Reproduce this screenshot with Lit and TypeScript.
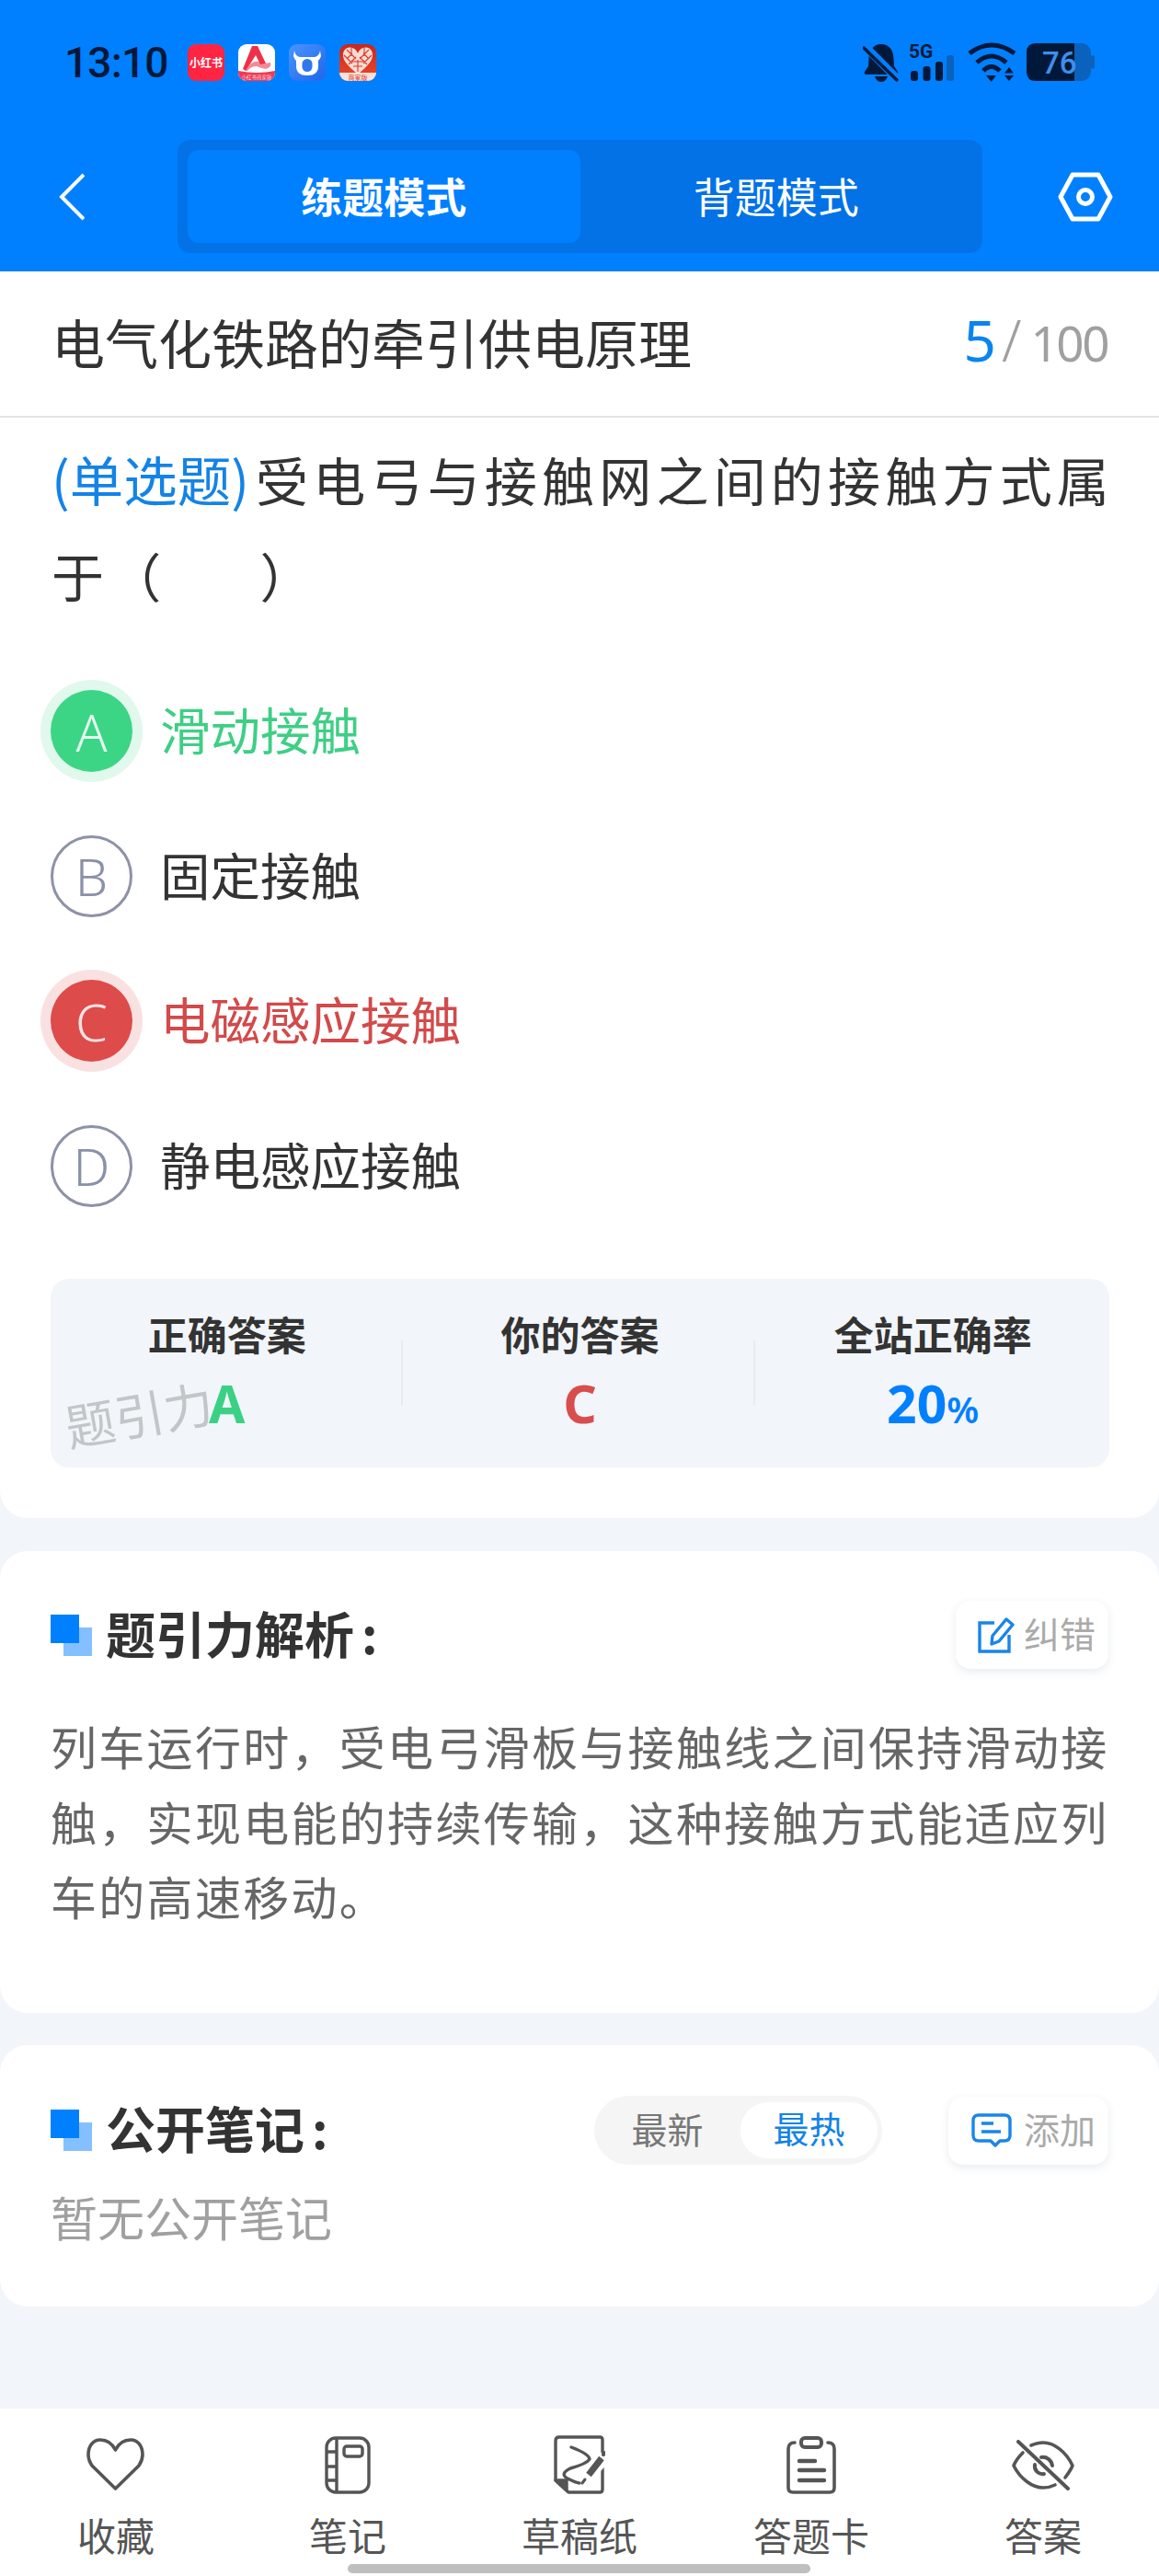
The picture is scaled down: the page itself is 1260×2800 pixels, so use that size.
import {LitElement, html, svg, css} from 'lit';
import {customElement} from 'lit/decorators.js';
import {classMap} from 'lit/directives/class-map.js';

const options = [
  {key: 'A', text: '滑动接触', state: 'right'},
  {key: 'B', text: '固定接触', state: ''},
  {key: 'C', text: '电磁感应接触', state: 'wrong'},
  {key: 'D', text: '静电感应接触', state: ''},
];

const DARK = '#00193a';
const GREY = '#555';

const appIcons = html`
  <svg width="40" height="40" viewBox="0 0 40 40">
    <rect width="40" height="40" rx="9" fill="#ff2442" />
    <text x="20" y="25" text-anchor="middle" font-size="12" font-weight="700" fill="#fff">小红书</text>
  </svg>
  <svg width="40" height="40" viewBox="0 0 40 40">
    <defs><clipPath id="c1"><rect width="40" height="40" rx="9" /></clipPath></defs>
    <g clip-path="url(#c1)">
      <rect width="40" height="40" fill="#fff" />
      <path d="M0 29 Q20 33 40 29 V40 H0Z" fill="#ee3a55" />
      <path d="M8 29 Q14 17 22 19 Q28 22 35 20 Q37 25 30 27 Q24 26 20 24 Q14 24 10 29Z" fill="#f58a94" />
      <path d="M15 2 L21 2 L30 21 L24 22 L19 12 Q14 20 8 29 L5 27 Z" fill="#ee3148" />
      <text x="20" y="37.5" text-anchor="middle" font-size="5.5" fill="#ffd8dd">小红书商家版</text>
    </g>
  </svg>
  <svg width="40" height="40" viewBox="0 0 40 40">
    <defs>
      <linearGradient id="g2" x1="0" y1="0" x2="1" y2="1">
        <stop offset="0" stop-color="#4a94ff" /><stop offset="1" stop-color="#1f66ea" />
      </linearGradient>
    </defs>
    <rect width="40" height="40" rx="9" fill="url(#g2)" />
    <path d="M6 7 Q7 13 12 14 H28 Q33 13 34 7 L35 13 Q34 16 32 18 V24 Q32 34 20 34 Q8 34 8 24 V18 Q6 16 5 13Z" fill="#fff" />
    <rect x="14.5" y="16" width="11" height="14" rx="5.5" fill="#2f78f0" />
  </svg>
  <svg width="40" height="40" viewBox="0 0 40 40">
    <defs>
      <clipPath id="c3"><rect width="40" height="40" rx="9" /></clipPath>
      <linearGradient id="g3" x1="0" y1="0" x2="0" y2="1">
        <stop offset="0" stop-color="#c9261a" /><stop offset="1" stop-color="#ea4a2e" />
      </linearGradient>
    </defs>
    <g clip-path="url(#c3)">
      <rect width="40" height="40" fill="url(#g3)" />
      <path d="M20 10 C16 0 3 2 4 13 C5 21 14 27 20 33 C26 27 35 21 36 13 C37 2 24 0 20 10Z" fill="#f8dcd2" />
      <path d="M8 6 L18 16 M32 6 L22 16 M5 12 L14 21 M35 12 L26 21 M13 3 V13 M27 3 V13 M8 16 L14 10 M32 16 L26 10 M20 17 V30 M14 19 H26 M15 24 H25 M10 22 L18 14 M30 22 L22 14" stroke="#d8392a" stroke-width="1.1" fill="none" />
      <rect y="31" width="40" height="9" fill="#fbe3da" />
      <text x="20" y="38.5" text-anchor="middle" font-size="7" fill="#d8392a">商家版</text>
    </g>
  </svg>
`;

const bell = svg`
  <path d="M20 1 C11 1 7 8 6.5 16 L6 25 L2 31 Q1 34 4 34 H36 Q39 34 38 31 L34 25 L33.5 16 C33 8 29 1 20 1Z" fill="${DARK}" />
  <path d="M13 36 H27 Q25 42 20 42 Q15 42 13 36Z" fill="${DARK}" />
  <path d="M1 2 L39 40" stroke="#0080ff" stroke-width="9" />
  <path d="M0 4 L38 41" stroke="${DARK}" stroke-width="3.5" />
`;

const signal = svg`
  <text x="0" y="16" font-size="21" font-weight="700" font-family="Roboto, sans-serif" fill="${DARK}">5G</text>
  <rect x="2" y="30" width="8" height="11" rx="3" fill="${DARK}" />
  <rect x="15.5" y="25" width="8" height="16" rx="3" fill="${DARK}" />
  <rect x="29" y="20" width="8" height="21" rx="3" fill="${DARK}" />
  <rect x="41" y="13" width="8" height="28" rx="3" fill="#0a62bc" />
`;

const wifi = svg`
  <g fill="none" stroke="${DARK}" stroke-width="5">
    <path d="M2 12 Q25.5 -6 51 12" />
    <path d="M10 22 Q25.5 8 42 22" />
    <path d="M17 31 Q25.5 22 35 31" />
  </g>
  <path d="M20 36 H31 L25.7 43Z" fill="${DARK}" />
  <path d="M40 33.5 L45 27 L50 33.5Z M40 36 H50 L45 42Z" fill="${DARK}" />
`;

const battery = svg`
  <rect width="70" height="41" rx="10" fill="#0a62bc" />
  <rect x="70" y="13" width="4" height="15" rx="2" fill="#0a62bc" />
  <path d="M10 0 H52 V41 H10 Q0 41 0 31 V10 Q0 0 10 0Z" fill="${DARK}" />
  <text x="17" y="33" font-size="33" font-weight="500" font-family="Roboto, sans-serif" fill="#3f8fe9">76</text>
`;

const navIcons = {
  heart: html`<svg width="64" height="58" viewBox="0 0 64 58" fill="none" stroke="${GREY}" stroke-width="3.6" stroke-linejoin="round">
    <path d="M31.5 13 C28 6 22 2 15 2 C7 2 2 9 2 18 C2 23 4 27 6 30 L31.5 55 L57 30 C59 27 61 23 61 18 C61 9 56 2 48 2 C41 2 35 6 31.5 13Z" />
  </svg>`,
  book: html`<svg width="50" height="63" viewBox="0 0 50 63" fill="none" stroke="${GREY}" stroke-width="3.4">
    <rect x="2" y="2" width="46" height="59" rx="10" />
    <path d="M13 2 V61 M2 17 H13 M2 33 H13 M2 48 H13" />
    <rect x="21" y="11" width="20" height="11" rx="3" />
  </svg>`,
  draft: html`<svg width="56" height="64" viewBox="0 0 56 64" fill="none" stroke="${GREY}" stroke-width="3.4" stroke-linecap="round" stroke-linejoin="round">
    <path d="M6 2 H50 Q53 2 53 5 V59 Q53 62 50 62 H16 L2 49 V6 Q2 2 6 2Z" />
    <path d="M2 49 H14 V60 Z" fill="${GREY}" />
    <path d="M19 13 Q38 20 39 26 Q36 31 18 36 Q6 42 15 47 Q25 52 28 52" />
    <path d="M56 23 L32 50" stroke="#fff" stroke-width="14" stroke-linecap="butt" />
    <path d="M52 25 L38 43" stroke-width="7" stroke-linecap="butt" />
    <path d="M54 21 L56 19" stroke-width="4" />
    <path d="M34 48 L31 52" stroke-width="3" />
  </svg>`,
  clip: html`<svg width="54" height="63" viewBox="0 0 54 63" fill="none" stroke="${GREY}" stroke-width="3.6" stroke-linecap="round">
    <path d="M9 7 Q2 7 2 14 V56 Q2 61 7 61 H47 Q52 61 52 56 V14 Q52 7 45 7" />
    <rect x="16" y="2" width="22" height="10" rx="4" stroke-width="4" />
    <path d="M14 27 H31 M14 37 H41 M14 48 H41" stroke-width="4.4" />
  </svg>`,
  eye: html`<svg width="68" height="55" viewBox="0 0 68 55" fill="none" stroke="${GREY}" stroke-width="3.6" stroke-linecap="round" stroke-linejoin="round">
    <path d="M21 6 C26 4 30 3 34 3 C46 3 59 13 66 28 C64 33 61 37 58 41" />
    <path d="M47 49 C43 51 38 52 34 52 C22 52 9 42 2 28 C4 23 8 18 12 14" />
    <path d="M32 19 C38 18 43 22 44 28" stroke-width="4" />
    <path d="M25 27 C24 33 29 38 35 37" stroke-width="4" />
    <path d="M7 2 L61 53" stroke-width="4" />
  </svg>`,
};

const navItems = [
  {icon: navIcons.heart, label: '收藏'},
  {icon: navIcons.book, label: '笔记'},
  {icon: navIcons.draft, label: '草稿纸'},
  {icon: navIcons.clip, label: '答题卡'},
  {icon: navIcons.eye, label: '答案'},
];

const mark = html`<svg class="mark" width="45" height="45" viewBox="0 0 45 45">
  <rect x="14" y="14" width="31" height="31" fill="#84c0ff" />
  <rect width="31" height="31" fill="#0080ff" />
</svg>`;

@customElement('app-root')
export class AppRoot extends LitElement {
  static styles = css`
    :host {
      display: flex;
      flex-direction: column;
      position: relative;
      width: 1260px;
      height: 2800px;
      background: #f2f5f9;
      font-family: 'Noto Sans CJK SC', 'Noto Sans', sans-serif;
      color: #333;
      overflow: hidden;
    }
    svg {
      display: block;
      flex: none;
    }
    .header {
      height: 295px;
      flex: none;
      background: #0080ff;
      box-sizing: border-box;
      padding-top: 47px;
    }
    .status {
      display: flex;
      align-items: center;
      height: 42px;
      padding-left: 70px;
    }
    .time {
      font: 500 46px/42px Roboto, sans-serif;
      letter-spacing: -0.8px;
      color: #00193a;
      width: 134px;
    }
    .apps {
      display: flex;
      gap: 15px;
    }
    .sys {
      display: flex;
      align-items: center;
      margin-left: auto;
      margin-right: 70px;
      gap: 12px;
    }
    .bell {
      margin-right: -2px;
    }
    .signal {
      margin-top: -6px;
    }
    .nav {
      display: flex;
      align-items: center;
      margin-top: 63px;
      height: 123px;
    }
    .back {
      margin-left: 64px;
    }
    .tabs {
      display: grid;
      grid-template-columns: 1fr 1fr;
      width: 875px;
      height: 123px;
      box-sizing: border-box;
      padding: 11px;
      margin-left: 101px;
      background: #0272e6;
      border-radius: 14px;
    }
    .tab {
      display: flex;
      align-items: center;
      justify-content: center;
      color: #fff;
      font-size: 45px;
      border-radius: 12px;
      padding-bottom: 3px;
    }
    .tab.active {
      background: #0080ff;
      font-weight: 700;
    }
    .setting {
      margin-left: 82px;
    }
    .paper {
      flex: none;
      background: #fff;
      border-radius: 0 0 30px 30px;
      padding-bottom: 55px;
    }
    .title-row {
      display: flex;
      align-items: center;
      justify-content: space-between;
      height: 157px;
      padding: 0 56px 0 56px;
      border-bottom: 2px solid #e4e4e4;
    }
    .title {
      font-size: 58px;
      margin-bottom: 6px;
    }
    .counter {
      display: flex;
      align-items: baseline;
      color: #a0a0a0;
      font-family: 'Noto Sans', sans-serif;
      font-size: 53px;
      line-height: 70px;
      margin-bottom: 6px;
    }
    .counter b {
      color: #0a84f0;
      font-size: 62px;
      font-weight: 400;
    }
    .counter i {
      font-style: normal;
      font-size: 62px;
      margin: 0 10px 0 6px;
      font-weight: 300;
    }
    .counter span {
      letter-spacing: -2.5px;
    }
    .question {
      margin: 14px 0 0;
      padding: 0 20px 0 56px;
      font-size: 57px;
      line-height: 104px;
      letter-spacing: 5.2px;
      white-space: nowrap;
    }
    .qtype {
      color: #1483e6;
      font-size: 58.5px;
      letter-spacing: 0;
      margin-right: 7px;
    }
    .blank {
      display: inline-block;
      width: 102px;
    }
    .options {
      margin-top: 40px;
    }
    .option {
      display: flex;
      align-items: center;
      height: 157.5px;
      padding-left: 55px;
      font-size: 54.5px;
      color: #333;
    }
    .option-text {
      margin-bottom: 6px;
    }
    .dot {
      width: 89px;
      height: 89px;
      box-sizing: border-box;
      display: flex;
      align-items: center;
      justify-content: center;
      flex: none;
      margin-right: 30px;
      border-radius: 50%;
      border: 3px solid #8e92a6;
      color: #8a90a8;
      font: 300 56px/1 'Noto Sans', sans-serif;
    }
    .right {
      color: #3ecf85;
    }
    .right .dot {
      background: #3bd585;
      border: none;
      box-shadow: 0 0 0 11px #e1f8ec;
      color: #e4faef;
    }
    .wrong {
      color: #d24a4a;
    }
    .wrong .dot {
      background: #dd4b4b;
      border: none;
      box-shadow: 0 0 0 11px #fae1e1;
      color: #fbe3e3;
    }
    .answers {
      position: relative;
      display: grid;
      grid-template-columns: repeat(3, 1fr);
      height: 205px;
      box-sizing: border-box;
      margin: 44px 54px 0 55px;
      padding-top: 31px;
      background: #f2f5f9;
      border-radius: 20px;
      text-align: center;
    }
    .col {
      position: relative;
    }
    .col + .col::before {
      content: '';
      position: absolute;
      left: -3px;
      top: 36px;
      height: 71px;
      width: 2px;
      background: #e9ebee;
    }
    .col-label {
      font-size: 43px;
      line-height: 56px;
      font-weight: 700;
    }
    .col-value {
      margin-top: 18px;
      font-size: 57px;
      line-height: 60px;
      font-weight: 700;
      font-family: 'Noto Sans', sans-serif;
    }
    .col-value small {
      font-size: 40px;
      font-weight: 600;
    }
    .green {
      color: #3bd184;
    }
    .red {
      color: #d84e4e;
    }
    .blue {
      color: #0080ff;
    }
    .watermark {
      position: absolute;
      left: 15px;
      top: 116px;
      font-size: 54px;
      line-height: 60px;
      color: #c3c6c9;
      transform: rotate(-10deg);
      white-space: nowrap;
    }
    .card {
      flex: none;
      margin-top: 36px;
      background: #fff;
      border-radius: 30px;
      padding: 54px 55px 0 55px;
    }
    .card.notes {
      margin-top: 35px;
      padding-top: 56px;
      padding-bottom: 63px;
    }
    .card-head {
      display: flex;
      align-items: center;
      height: 74px;
    }
    .mark {
      margin-right: 15px;
    }
    .card-title {
      font-size: 54px;
      font-weight: 700;
      margin: 0 auto 6px 0;
    }
    .card-title span {
      margin-left: 8px;
    }
    .pill {
      display: flex;
      align-items: center;
      height: 74px;
      box-sizing: border-box;
      padding: 0 14px 0 24px;
      gap: 10px;
      background: #fff;
      border-radius: 16px;
      box-shadow: 0 3px 10px rgba(30, 60, 100, 0.1);
      font-size: 39px;
      color: #aaa;
    }
    .pill.add {
      padding-left: 25px;
      gap: 13px;
    }
    .pill span {
      margin-bottom: 6px;
    }
    .analysis {
      margin-top: 43px;
      padding-bottom: 86px;
      font-size: 50px;
      line-height: 81.5px;
      letter-spacing: 2.3px;
      color: #666;
      white-space: nowrap;
    }
    .segment {
      display: flex;
      align-items: center;
      width: 313px;
      height: 75px;
      box-sizing: border-box;
      padding: 0 5px 0 0;
      margin-right: 72px;
      background: #f5f5f5;
      border-radius: 38px;
      font-size: 39px;
      color: #777;
    }
    .segment span {
      flex: 1;
      text-align: center;
      padding-bottom: 6px;
    }
    .segment .on {
      flex: none;
      width: 149px;
      height: 61px;
      line-height: 55px;
      padding-bottom: 0;
      background: #fff;
      border-radius: 30px;
      color: #1483e6;
    }
    .empty {
      margin-top: 21px;
      font-size: 51px;
      line-height: 70px;
      color: #a0a0a0;
    }
    .bottom {
      margin-top: auto;
      height: 182px;
      flex: none;
      display: grid;
      grid-template-columns: repeat(5, 1fr);
      background: #fff;
      padding-top: 29px;
      box-sizing: border-box;
    }
    .item {
      display: flex;
      flex-direction: column;
      align-items: center;
    }
    .item-icon {
      height: 64px;
      display: flex;
      align-items: center;
    }
    .item-label {
      margin-top: 19px;
      font-size: 42px;
      line-height: 50px;
      color: #555;
    }
    .home {
      position: absolute;
      left: 378px;
      bottom: 3px;
      width: 503px;
      height: 10px;
      border-radius: 5px;
      background: #bfbfbf;
    }
  `;

  renderStatus() {
    return html`
      <div class="status">
        <div class="time">13:10</div>
        <div class="apps">${appIcons}</div>
        <div class="sys">
          <svg class="bell" width="40" height="42" viewBox="0 0 40 42">${bell}</svg>
          <svg class="signal" width="52" height="48" viewBox="0 -6 52 48">${signal}</svg>
          <svg width="52" height="44" viewBox="0 0 52 44">${wifi}</svg>
          <svg width="74" height="42" viewBox="0 0 74 42">${battery}</svg>
        </div>
      </div>
    `;
  }

  renderNav() {
    return html`
      <div class="nav">
        <svg class="back" width="28" height="52" viewBox="0 0 28 52" fill="none" stroke="#fff" stroke-width="4">
          <path d="M27 2 L3 26 L27 50" />
        </svg>
        <div class="tabs">
          <div class="tab active">练题模式</div>
          <div class="tab">背题模式</div>
        </div>
        <svg class="setting" width="60" height="54" viewBox="0 0 60 54" fill="none" stroke="#fff" stroke-width="5" stroke-linejoin="round">
          <path d="M16 3 H44 L57 27 L44 51 H16 L3 27 Z" />
          <circle cx="30" cy="27" r="7.5" />
        </svg>
      </div>
    `;
  }

  renderQuestion() {
    return html`
      <div class="paper">
        <div class="title-row">
          <div class="title">电气化铁路的牵引供电原理</div>
          <div class="counter"><b>5</b><i>/</i><span>100</span></div>
        </div>
        <div class="question">
          <span class="qtype">(单选题)</span>受电弓与接触网之间的接触方式属<br />于（<span class="blank"></span>）
        </div>
        <div class="options">
          ${options.map(
            (o) => html`
              <div class=${classMap({option: true, right: o.state === 'right', wrong: o.state === 'wrong'})}>
                <div class="dot">${o.key}</div>
                <div class="option-text">${o.text}</div>
              </div>
            `
          )}
        </div>
        <div class="answers">
          <div class="col">
            <div class="col-label">正确答案</div>
            <div class="col-value green">A</div>
          </div>
          <div class="col">
            <div class="col-label">你的答案</div>
            <div class="col-value red">C</div>
          </div>
          <div class="col">
            <div class="col-label">全站正确率</div>
            <div class="col-value blue">20<small>%</small></div>
          </div>
          <div class="watermark">题引力</div>
        </div>
      </div>
    `;
  }

  renderAnalysis() {
    return html`
      <div class="card">
        <div class="card-head">
          ${mark}
          <div class="card-title">题引力解析<span>:</span></div>
          <div class="pill">
            <svg width="40" height="40" viewBox="0 0 40 40" fill="none" stroke="#1a85e8" stroke-width="3.4">
              <path d="M18 7 H2 V38 H34 V20" />
              <path d="M15 30 L16 21 L31 3 L38 9 L23 27 Z" stroke-linejoin="round" />
            </svg>
            <span>纠错</span>
          </div>
        </div>
        <div class="analysis">
          列车运行时，受电弓滑板与接触线之间保持滑动接<br />
          触，实现电能的持续传输，这种接触方式能适应列<br />
          车的高速移动。
        </div>
      </div>
    `;
  }

  renderNotes() {
    return html`
      <div class="card notes">
        <div class="card-head">
          ${mark}
          <div class="card-title">公开笔记<span>:</span></div>
          <div class="segment">
            <span>最新</span>
            <span class="on">最热</span>
          </div>
          <div class="pill add">
            <svg width="44" height="37" viewBox="0 0 44 37" fill="none" stroke="#1a85e8" stroke-width="3.4">
              <path d="M8 2 H36 Q42 2 42 8 V24 Q42 30 36 30 H31 L26 35 L21 30 H8 Q2 30 2 24 V8 Q2 2 8 2Z" stroke-linejoin="round" />
              <path d="M11 11 H24 M11 20 H32" stroke-width="3.6" />
            </svg>
            <span>添加</span>
          </div>
        </div>
        <div class="empty">暂无公开笔记</div>
      </div>
    `;
  }

  render() {
    return html`
      <div class="header">${this.renderStatus()} ${this.renderNav()}</div>
      ${this.renderQuestion()} ${this.renderAnalysis()} ${this.renderNotes()}
      <div class="bottom">
        ${navItems.map(
          (n) => html`
            <div class="item">
              <div class="item-icon">${n.icon}</div>
              <div class="item-label">${n.label}</div>
            </div>
          `
        )}
      </div>
      <div class="home"></div>
    `;
  }
}
